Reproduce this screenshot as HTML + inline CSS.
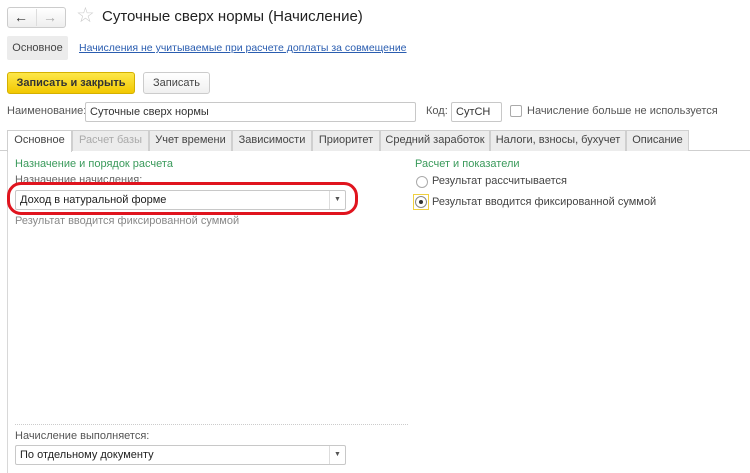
<!DOCTYPE html>
<html><head><meta charset="utf-8"><style>
*{box-sizing:border-box;margin:0;padding:0}
body{width:750px;height:473px;background:#fff;font-family:"Liberation Sans",Arial,sans-serif;font-size:11px;color:#333;position:relative;overflow:hidden}
.a{position:absolute;white-space:nowrap}
.inp{position:absolute;border:1px solid #c8c8c8;border-radius:2px;background:#fff;padding:0 4px;line-height:18px;color:#333;white-space:nowrap}
.tab{position:absolute;top:130px;height:21px;border:1px solid #cfcfcf;border-bottom:none;background:#ececec;line-height:19px;text-align:center;color:#444;font-size:11px;white-space:nowrap}
.dd{position:absolute;right:0;top:0;bottom:0;width:16px;border-left:1px solid #ddd;text-align:center;font-size:7px;line-height:18px;color:#555}
</style></head><body>
<div class="a" style="left:7px;top:7px;width:59px;height:21px;border:1px solid #ccc;border-radius:3px;background:linear-gradient(#fff,#eee)"></div>
<div class="a" style="left:36px;top:9px;width:1px;height:17px;background:#ddd"></div>
<div class="a" style="left:14px;top:7px;font-size:14px;line-height:20px;color:#333">&#8592;</div>
<div class="a" style="left:43px;top:7px;font-size:14px;line-height:20px;color:#aaa">&#8594;</div>
<div class="a" style="left:76px;top:4px;font-size:21px;line-height:24px;color:#ccc">&#9734;</div>
<div class="a" style="left:102px;top:7px;font-size:15px;line-height:20px;color:#222">Суточные сверх нормы (Начисление)</div>
<div class="a" style="left:7px;top:36px;width:61px;height:24px;background:#ececec;border-radius:2px;line-height:24px;text-align:center;color:#444">Основное</div>
<div class="a" style="left:79px;top:41px;color:#2a5db0;text-decoration:underline;font-size:10.5px;line-height:14px">Начисления не учитываемые при расчете доплаты за совмещение</div>
<div class="a" style="left:7px;top:72px;width:128px;height:22px;background:linear-gradient(#fde74a,#f2c800);border:1px solid #d4b000;border-radius:3px;line-height:20px;text-align:center;font-weight:bold;color:#333">Записать и закрыть</div>
<div class="a" style="left:143px;top:72px;width:67px;height:22px;background:linear-gradient(#fff,#f0f0f0);border:1px solid #ccc;border-radius:3px;line-height:20px;text-align:center;color:#444">Записать</div>
<div class="a" style="left:7px;top:105px;color:#555">Наименование:</div>
<div class="inp" style="left:85px;top:102px;width:331px;height:20px">Суточные сверх нормы</div>
<div class="a" style="left:426px;top:105px;color:#555">Код:</div>
<div class="inp" style="left:451px;top:102px;width:51px;height:20px">СутСН</div>
<div class="a" style="left:510px;top:105px;width:12px;height:12px;border:1px solid #aaa;border-radius:2px"></div>
<div class="a" style="left:527px;top:105px;color:#555">Начисление больше не используется</div>
<div class="a" style="left:0;top:150px;width:750px;height:1px;background:#cfcfcf"></div>
<div class="a" style="left:7px;top:150px;width:1px;height:323px;background:#d8d8d8"></div>
<div class="tab" style="left:7px;width:65px;background:#fff;height:22px">Основное</div>
<div class="tab" style="left:72px;width:77px;color:#aaa">Расчет базы</div>
<div class="tab" style="left:149px;width:83px">Учет времени</div>
<div class="tab" style="left:232px;width:80px">Зависимости</div>
<div class="tab" style="left:312px;width:68px">Приоритет</div>
<div class="tab" style="left:380px;width:110px">Средний заработок</div>
<div class="tab" style="left:490px;width:136px">Налоги, взносы, бухучет</div>
<div class="tab" style="left:626px;width:63px">Описание</div>
<div class="a" style="left:15px;top:158px;color:#3a9a5b">Назначение и порядок расчета</div>
<div class="a" style="left:15px;top:174px;color:#666">Назначение начисления:</div>
<div class="inp" style="left:15px;top:190px;width:331px;height:20px;color:#222">Доход в натуральной форме<div class="dd">&#9660;</div></div>
<div class="a" style="left:7px;top:182px;width:351px;height:33px;border:3px solid #e0141e;border-radius:14px"></div>
<div class="a" style="left:15px;top:215px;color:#888">Результат вводится фиксированной суммой</div>
<div class="a" style="left:415px;top:158px;color:#3a9a5b">Расчет и показатели</div>
<div class="a" style="left:416px;top:176px;width:12px;height:12px;border:1px solid #aaa;border-radius:50%"></div>
<div class="a" style="left:432px;top:175px;color:#444">Результат рассчитывается</div>
<div class="a" style="left:413px;top:194px;width:16px;height:16px;border:1px solid #f0d040"></div>
<div class="a" style="left:415px;top:196px;width:12px;height:12px;border:1px solid #888;border-radius:50%"></div>
<div class="a" style="left:419px;top:200px;width:4px;height:4px;background:#333;border-radius:50%"></div>
<div class="a" style="left:432px;top:196px;color:#444">Результат вводится фиксированной суммой</div>
<div class="a" style="left:15px;top:424px;width:393px;border-top:1px dotted #ccc"></div>
<div class="a" style="left:15px;top:430px;color:#555">Начисление выполняется:</div>
<div class="inp" style="left:15px;top:445px;width:331px;height:20px;color:#222">По отдельному документу<div class="dd">&#9660;</div></div>
</body></html>
